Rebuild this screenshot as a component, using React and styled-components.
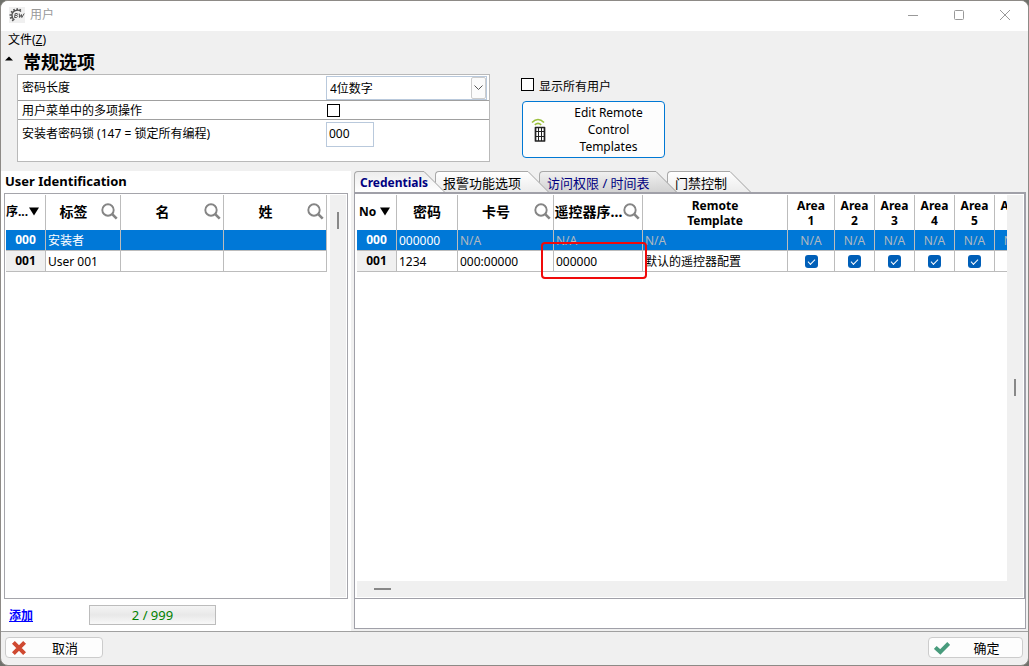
import React from "react";
import styled, { createGlobalStyle } from "styled-components";

const GlobalStyle = createGlobalStyle`
  *, *::before, *::after { box-sizing: border-box; }
  body {
    margin: 0;
    background: #6f716b;
    color: #000;
    font: 12px/16px "Noto Sans", "Noto Sans CJK SC", sans-serif;
  }
  button, input, select { font: inherit; color: inherit; }
`;

const Window = styled.div`
  display: flex;
  flex-direction: column;
  min-height: 100vh;
  background: #f0f0f0;
  border: 1px solid #8d8a86;
  border-radius: 8px;
  overflow: hidden;
`;

const TitleBar = styled.header`
  display: flex;
  align-items: center;
  height: 30px;
  padding: 0 0 2px 8px;
  background: #fff;
  color: #999;
`;

const Title = styled.h1`
  flex: 1;
  margin: 0 0 0 5px;
  font-size: 12px;
  font-weight: 400;
`;

const CaptionButton = styled.button`
  display: grid;
  place-items: center;
  width: 46px;
  height: 28px;
  padding: 0;
  border: 0;
  background: none;
  color: #999;
`;

const MenuBar = styled.nav`
  display: flex;
  height: 19px;
  padding: 1px 7px 0;
`;

const MenuItem = styled.button`
  height: 16px;
  padding: 0;
  border: 0;
  background: none;
`;

const Options = styled.section`
  display: flex;
  height: 121px;
  padding-right: 16px;
`;

const General = styled.div`
  flex: 0 0 489px;
  padding-left: 16px;
`;

const GeneralHeading = styled.h2`
  display: flex;
  align-items: center;
  gap: 10px;
  height: 24px;
  margin: 0 0 0 -12px;
  font-size: 18px;
  line-height: 24px;
`;

const Collapse = styled.button`
  width: 8px;
  height: 16px;
  padding: 2px 0 0;
  border: 0;
  background: none;
  display: flex;
`;

const Form = styled.form`
  height: 88px;
  border: 1px solid #b9b9b9;
  background: #fff;
`;

const FormRow = styled.div`
  display: flex;
  align-items: flex-start;
  height: ${(p) => p.$height}px;
  padding: ${(p) => p.$top}px 2px 0 0;
  border-bottom: ${(p) => (p.$last ? "0" : "1px solid #a0a0a0")};
`;

const FormLabel = styled.label`
  flex: 1;
  padding: ${(p) => p.$top}px 0 0 4px;
`;

const Field = styled.div`
  position: relative;
  width: 161px;
`;

const Select = styled.select`
  appearance: none;
  display: block;
  width: 100%;
  height: 24px;
  padding: 2px 20px 0 3px;
  border: 1px solid #b9c9dc;
  border-radius: 0;
  background: #fff;
`;

const SelectArrow = styled.span`
  position: absolute;
  top: 1px;
  right: 1px;
  display: grid;
  place-items: center;
  width: 15px;
  height: 22px;
  border: 1px solid #ccc;
  border-radius: 2px;
  background: #fbfbfb;
  pointer-events: none;
`;

const TextInput = styled.input`
  display: block;
  width: 48px;
  height: 25px;
  padding: 0 2px 2px;
  border: 1px solid #b9c9dc;
`;

const Check = styled.input.attrs({ type: "checkbox" })`
  appearance: none;
  display: block;
  width: 13px;
  height: 13px;
  margin: ${(p) => (p.$inForm ? "3px 0 0 1px" : "0")};
  border: 1px solid #000;
  background: #fff;
`;

const Side = styled.div`
  padding: 27px 0 0 31px;
`;

const ShowAll = styled.label`
  display: flex;
  align-items: flex-start;
  gap: 5px;
  padding-top: 1px;
  line-height: 17px;
`;

const RemoteButton = styled.button`
  display: flex;
  align-items: center;
  width: 143px;
  height: 57px;
  margin: 6px 0 0 1px;
  padding: 0 8px;
  border: 1px solid #0078d4;
  border-radius: 4px;
  background: #fdfdfd;
  line-height: 17px;
`;

const ButtonText = styled.span`
  flex: 1;
  padding-left: ${(p) => p.$inset}px;
  text-align: center;
`;

const Main = styled.main`
  display: flex;
  flex: 1;
  border-bottom: 1px solid #a0a0a0;
`;

const UsersPane = styled.section`
  display: flex;
  flex-direction: column;
  flex: 0 0 350px;
  padding: 0 3px;
  background: #fff;
`;

const PaneTitle = styled.h2`
  height: 22px;
  margin: 0 1px;
  font-size: 13px;
  line-height: 20px;
`;

const UsersBox = styled.div`
  display: flex;
  flex: 1;
  padding: 1px;
  border: 1px solid #a5a5ab;
`;

const GridArea = styled.div`
  flex: 1;
  min-width: 0;
  overflow: hidden;
`;

const VScroll = styled.div`
  flex: 0 0 16px;
  display: flex;
  justify-content: center;
  background: #f0f0f0;
  padding-top: ${(p) => p.$offset}px;
  &::before {
    content: "";
    width: 2px;
    height: 17px;
    background: #888;
  }
`;

const HScroll = styled.div`
  height: 16px;
  padding: 7px 17px;
  background: #f0f0f0;
  &::before {
    content: "";
    display: block;
    width: 17px;
    height: 2px;
    background: #888;
  }
`;

const Table = styled.table`
  table-layout: fixed;
  width: ${(p) => p.$width}px;
  border-collapse: separate;
  border-spacing: 0;
`;

const HeadCell = styled.th`
  height: 35px;
  padding: 0;
  border-right: 1px solid #bcbcbc;
  font-size: ${(p) => (p.$latin ? 12 : 14)}px;
  font-weight: 700;
  line-height: 15px;
`;

const HeadContent = styled.div`
  display: flex;
  align-items: center;
  justify-content: ${(p) => (p.$sort ? "flex-start" : "center")};
  gap: ${(p) => (p.$sort ? p.$sort : 0)}px;
  height: 35px;
  padding: 0 ${(p) => (p.$search ? 2 : 0)}px 2px ${(p) => (p.$inset ? 2 : 0)}px;
  white-space: nowrap;
`;

const HeadText = styled.span`
  flex: 1;
  min-width: 0;
`;

const Row = styled.tr`
  background: ${(p) => (p.$selected ? "#0078d7" : "#fff")};
  color: ${(p) => (p.$selected ? "#fff" : "#000")};
`;

const RowHead = styled.th`
  height: 21px;
  padding: 0;
  border-right: 1px solid #bcbcbc;
  border-bottom: 1px solid #bcbcbc;
  background: ${(p) => (p.$selected ? "#0078d7" : "#f0f0f0")};
  font-weight: 700;
`;

const Cell = styled.td`
  position: relative;
  height: 21px;
  padding: 2px 2px 0;
  border-right: 1px solid #bcbcbc;
  border-bottom: 1px solid #bcbcbc;
  color: ${(p) => (p.$muted ? "#b0b8c0" : "inherit")};
  text-align: ${(p) => (p.$center ? "center" : "left")};
  white-space: nowrap;
`;

const CheckCell = styled(Cell)`
  padding: 0;
`;

const Highlight = styled.span`
  position: absolute;
  z-index: 3;
  top: -9px;
  left: -13px;
  width: 106px;
  height: 37px;
  border: 2px solid #f00a0a;
  border-radius: 4px;
  pointer-events: none;
`;

const AreaCheck = styled.input.attrs({ type: "checkbox" })`
  appearance: none;
  display: block;
  position: relative;
  width: 13px;
  height: 13px;
  margin: 0 auto;
  border-radius: 3px;
  background: #005fb8;
  &::after {
    content: "";
    position: absolute;
    top: 4px;
    left: 3px;
    width: 7px;
    height: 4px;
    border: solid #fff;
    border-width: 0 0 1px 1px;
    transform: rotate(-45deg);
  }
`;

const UsersFooter = styled.div`
  display: flex;
  align-items: center;
  height: 32px;
  padding-left: 5px;
`;

const AddLink = styled.a`
  width: 80px;
  padding-top: 2px;
  color: #00f;
  font-weight: 700;
`;

const Counter = styled.output`
  width: 127px;
  height: 20px;
  border: 1px solid #bcbcbc;
  background: linear-gradient(#f4f4f4, #e8e8e8 50%, #f8f8f8);
  color: #008000;
  font-size: 13px;
  line-height: 18px;
  text-align: center;
`;

const DetailPane = styled.section`
  display: flex;
  flex-direction: column;
  flex: 1;
  min-width: 0;
  padding: 0 2px 2px 3px;
`;

const Tabs = styled.div`
  display: flex;
  height: 21px;
`;

const Tab = styled.button`
  position: relative;
  z-index: ${(p) => p.$order};
  flex: 0 0 ${(p) => p.$width}px;
  min-width: 0;
  height: 21px;
  margin-right: 11px;
  padding: 1px 0 0 ${(p) => (p.$active ? 5 : 7)}px;
  border: 1px solid #a8a8a8;
  border-width: 1px 0 0 1px;
  border-radius: 4px 0 0 0;
  background: ${(p) => p.$fill};
  color: ${(p) => (p.$navy ? "#000080" : "#000")};
  font-size: ${(p) => (p.$active ? 12 : 13)}px;
  font-weight: ${(p) => (p.$active ? 700 : 400)};
  text-align: left;
  white-space: nowrap;
`;

const TabSlope = styled.span`
  position: absolute;
  z-index: -1;
  top: -1px;
  left: 100%;
  width: 21px;
  height: 21px;
  background: ${(p) => p.$fill};
  clip-path: polygon(0 0, 100% 100%, 0 100%);
`;

const TabEdge = styled.svg`
  position: absolute;
  z-index: -1;
  top: -1px;
  left: 100%;
`;

const DetailBox = styled.div`
  display: flex;
  flex-direction: column;
  flex: 1;
  border: 1px solid #a0a0a8;
  border-top-width: 2px;
  background: #fff;
`;

const DetailGrid = styled.div`
  display: flex;
  flex: 1;
  padding: 1px 1px 1px 2px;
  border-right: 1px solid #a0a0a8;
  border-bottom: 1px solid #a0a0a8;
`;

const DetailColumn = styled.div`
  display: flex;
  flex-direction: column;
  flex: 1;
  min-width: 0;
`;

const DetailNote = styled.div`
  height: 29px;
`;

const ActionBar = styled.footer`
  display: flex;
  justify-content: space-between;
  height: 33px;
  padding: 5px 5px 0 4px;
`;

const ActionButton = styled.button`
  display: flex;
  align-items: center;
  width: ${(p) => p.$width}px;
  height: 21px;
  padding: 0 5px;
  border: 1px solid #ccc;
  border-radius: 4px;
  background: #fdfdfd;
  font-size: 13px;
`;

const SearchIcon = () => (
  <svg width="17" height="17" viewBox="0 0 17 17" fill="none" stroke="#858585" aria-hidden="true">
    <circle cx="7" cy="7" r="5.7" strokeWidth="1.9" />
    <path d="M11.2 11.2L15.7 15.7" strokeWidth="2.6" />
  </svg>
);

const SortIcon = () => (
  <svg width="10" height="9" viewBox="0 0 10 9" aria-hidden="true">
    <path d="M0 0.5H10L5 8.5Z" />
  </svg>
);

const AppIcon = () => (
  <svg width="16" height="16" viewBox="0 0 16 16" fill="none" stroke="#555" aria-hidden="true">
    <path fill="#f0f0f0" stroke="none" d="M0 0H16V16H0Z" />
    <path strokeWidth="1.3" d="M12 4.5C9 2 3.2 3.2 3 8C3 10.5 4 12 5.5 12.8" />
    <path strokeWidth="1.6" d="M0.5 8H3M1 11.3L3.4 10.3M2 4.4L4 5.8M4.7 2L5.7 4.2M8.2 1.2V3.5M11.5 2L10.6 4M3.3 14L4.6 12.3" />
    <path strokeWidth="1" d="M5.5 10.5L6.2 6.5H8.2Q9.4 7.4 7.8 8.4Q9.6 9.4 7.6 10.5ZM6 8.4H8M10.3 6.5L10.6 10.5L12.4 7.5L12.8 10.5L15.2 6.5" />
  </svg>
);

const RemoteIcon = () => (
  <svg width="20" height="28" viewBox="0 0 20 28" fill="none" aria-hidden="true">
    <path stroke="#9bc03e" strokeWidth="1.6" d="M1 6.5Q7 0.5 13 6.5M3.8 8.8Q7 5.8 10.2 8.8" />
    <path stroke="#222" strokeWidth="1.7" strokeLinejoin="round" d="M4.5 11.5H13.5V25H4.5Z" />
    <path stroke="#222" strokeWidth="1" d="M7.5 11.5V25M10.5 11.5V25M4.5 15.5H13.5M4.5 20.5H13.5" />
  </svg>
);

const CrossIcon = () => (
  <svg width="16" height="16" viewBox="0 0 16 16" stroke="#cf4a32" strokeWidth="4" aria-hidden="true">
    <path d="M2.4 2.4L13.6 13.6M13.6 2.4L2.4 13.6" />
  </svg>
);

const TickIcon = () => (
  <svg width="16" height="16" viewBox="0 0 16 16" fill="none" stroke="#489b7c" strokeWidth="4" aria-hidden="true">
    <path d="M1.3 7.4L6.3 12L14.7 3.5" />
  </svg>
);

const tabs = [
  { text: "Credentials", width: 70, navy: true, active: true, fill: "linear-gradient(#ededed, #fff)" },
  { text: "报警功能选项", width: 93, fill: "linear-gradient(#fff, #ececec)" },
  { text: "访问权限 / 时间表", width: 117, navy: true, fill: "linear-gradient(#f0f0f0, #d2d2d2)" },
  { text: "门禁控制", width: 63, fill: "linear-gradient(#fff, #ececec)" },
];

const userColumns = [
  { text: "标签", width: 75 },
  { text: "名", width: 103 },
  { text: "姓", width: 103 },
];

const credentialColumns = [
  { text: "密码", width: 61 },
  { text: "卡号", width: 96, search: true },
  { text: "遥控器序...", width: 89, search: true },
];

const areas = [1, 2, 3, 4, 5, 6];

function ColumnHead({ text, search }) {
  return (
    <HeadCell scope="col">
      <HeadContent $search={search}>
        <HeadText>{text}</HeadText>
        {search && <SearchIcon />}
      </HeadContent>
    </HeadCell>
  );
}

function UsersTable() {
  return (
    <Table $width={321}>
      <colgroup>
        <col width="40" />
        {userColumns.map((c) => <col key={c.text} width={c.width} />)}
      </colgroup>
      <thead>
        <tr>
          <HeadCell scope="col" $latin><HeadContent $sort={1}>序...<SortIcon /></HeadContent></HeadCell>
          {userColumns.map((c) => <ColumnHead key={c.text} text={c.text} search />)}
        </tr>
      </thead>
      <tbody>
        <Row $selected>
          <RowHead scope="row" $selected>000</RowHead>
          <Cell>安装者</Cell><Cell /><Cell />
        </Row>
        <Row>
          <RowHead scope="row">001</RowHead>
          <Cell>User 001</Cell><Cell /><Cell />
        </Row>
      </tbody>
    </Table>
  );
}

function CredentialsTable() {
  return (
    <Table $width={678}>
      <colgroup>
        <col width="40" />
        {credentialColumns.map((c) => <col key={c.text} width={c.width} />)}
        <col width="145" />
        {areas.map((n) => <col key={n} width={n === 1 ? 47 : 40} />)}
      </colgroup>
      <thead>
        <tr>
          <HeadCell scope="col" $latin><HeadContent $sort={4} $inset>No<SortIcon /></HeadContent></HeadCell>
          {credentialColumns.map((c) => <ColumnHead key={c.text} {...c} />)}
          <HeadCell scope="col" $latin>Remote<br />Template</HeadCell>
          {areas.map((n) => <HeadCell key={n} scope="col" $latin>Area<br />{n}</HeadCell>)}
        </tr>
      </thead>
      <tbody>
        <Row $selected>
          <RowHead scope="row" $selected>000</RowHead>
          <Cell>000000</Cell>
          <Cell $muted>N/A</Cell>
          <Cell $muted>N/A</Cell>
          <Cell $muted>N/A</Cell>
          {areas.map((n) => <Cell key={n} $muted $center>N/A</Cell>)}
        </Row>
        <Row>
          <RowHead scope="row">001</RowHead>
          <Cell>1234</Cell>
          <Cell>000:00000</Cell>
          <Cell>000000<Highlight /></Cell>
          <Cell>默认的遥控器配置</Cell>
          {areas.map((n) => (
            <CheckCell key={n}><AreaCheck defaultChecked aria-label={`Area ${n}`} /></CheckCell>
          ))}
        </Row>
      </tbody>
    </Table>
  );
}

export default function App() {
  return (
    <>
      <GlobalStyle />
      <Window>
        <TitleBar>
          <AppIcon />
          <Title>用户</Title>
          <CaptionButton aria-label="最小化">
            <svg width="10" height="10" stroke="currentColor"><path d="M0 5.5H10" /></svg>
          </CaptionButton>
          <CaptionButton aria-label="最大化">
            <svg width="10" height="10" fill="none" stroke="currentColor"><rect x="0.5" y="0.5" width="9" height="9" rx="1" /></svg>
          </CaptionButton>
          <CaptionButton aria-label="关闭">
            <svg width="10" height="10" stroke="currentColor"><path d="M0 0L10 10M10 0L0 10" /></svg>
          </CaptionButton>
        </TitleBar>
        <MenuBar>
          <MenuItem>文件(<u>Z</u>)</MenuItem>
        </MenuBar>
        <Options>
          <General>
            <GeneralHeading>
              <Collapse aria-label="折叠">
                <svg width="8" height="5"><path d="M0 4.5L4 0.5L8 4.5Z" /></svg>
              </Collapse>
              常规选项
            </GeneralHeading>
            <Form>
              <FormRow $height={26} $top={1}>
                <FormLabel htmlFor="length" $top={4}>密码长度</FormLabel>
                <Field>
                  <Select id="length" defaultValue="4">
                    <option value="4">4位数字</option>
                    <option value="6">6位数字</option>
                  </Select>
                  <SelectArrow>
                    <svg width="9" height="6" fill="none" stroke="#555"><path d="M0.5 0.5L4.5 4.5L8.5 0.5" /></svg>
                  </SelectArrow>
                </Field>
              </FormRow>
              <FormRow $height={19} $top={0}>
                <FormLabel htmlFor="multi" $top={2}>用户菜单中的多项操作</FormLabel>
                <Field><Check id="multi" $inForm /></Field>
              </FormRow>
              <FormRow $height={41} $top={2} $last>
                <FormLabel htmlFor="lock" $top={4}>安装者密码锁 (147 = 锁定所有编程)</FormLabel>
                <Field><TextInput id="lock" defaultValue="000" /></Field>
              </FormRow>
            </Form>
          </General>
          <Side>
            <ShowAll><Check />显示所有用户</ShowAll>
            <RemoteButton>
              <RemoteIcon />
              <ButtonText $inset={10}>Edit Remote Control Templates</ButtonText>
            </RemoteButton>
          </Side>
        </Options>
        <Main>
          <UsersPane>
            <PaneTitle>User Identification</PaneTitle>
            <UsersBox>
              <GridArea><UsersTable /></GridArea>
              <VScroll $offset={17} />
            </UsersBox>
            <UsersFooter>
              <AddLink href="#add">添加</AddLink>
              <Counter>2 / 999</Counter>
            </UsersFooter>
          </UsersPane>
          <DetailPane>
            <Tabs role="tablist">
              {tabs.map((t, i) => (
                <Tab
                  key={t.text}
                  role="tab"
                  aria-selected={!!t.active}
                  $order={tabs.length - i}
                  $width={t.width}
                  $fill={t.fill}
                  $navy={t.navy}
                  $active={t.active}
                >
                  {t.text}
                  <TabSlope $fill={t.fill} />
                  <TabEdge width="21" height="21" fill="none" stroke="#a0a0a0">
                    <path d="M0 0.5L20.5 21" />
                  </TabEdge>
                </Tab>
              ))}
            </Tabs>
            <DetailBox>
              <DetailGrid>
                <DetailColumn>
                  <GridArea><CredentialsTable /></GridArea>
                  <HScroll />
                </DetailColumn>
                <VScroll $offset={184} />
              </DetailGrid>
              <DetailNote />
            </DetailBox>
          </DetailPane>
        </Main>
        <ActionBar>
          <ActionButton $width={98}>
            <CrossIcon />
            <ButtonText $inset={6}>取消</ButtonText>
          </ActionButton>
          <ActionButton $width={95}>
            <TickIcon />
            <ButtonText $inset={6}>确定</ButtonText>
          </ActionButton>
        </ActionBar>
      </Window>
    </>
  );
}
